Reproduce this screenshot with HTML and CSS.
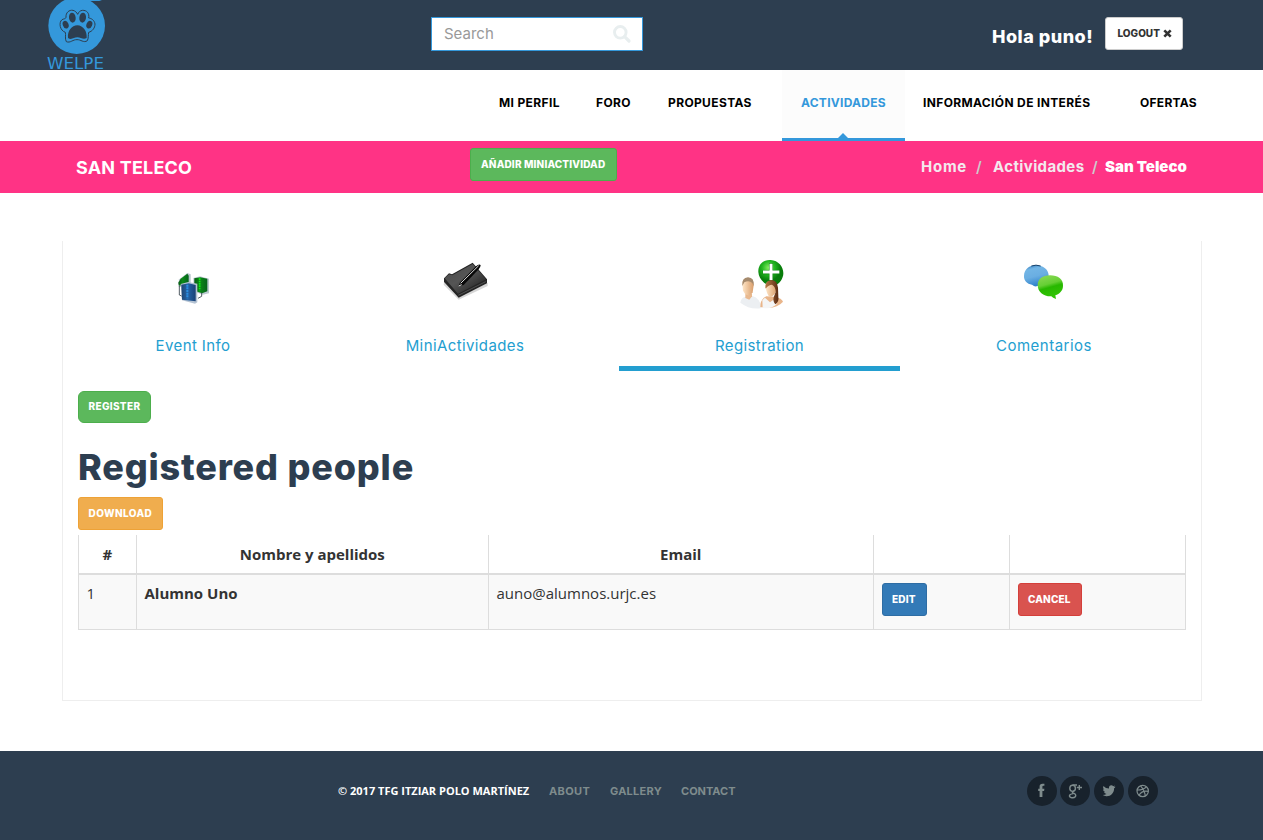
FILE: index.html
```html
<!DOCTYPE html>
<html lang="es">
<head>
<meta charset="utf-8">
<title>San Teleco</title>
<link rel="stylesheet" href="styles.css">
</head>
<body>
<header class="topbar">
  <a class="logo">
    <svg width="60" height="70" viewBox="45 0 180 210">
      <circle cx="140" cy="77" r="85" fill="#3498db"/>
      <path d="M165 0H216L208 3H182L178 9Z" fill="#3498db"/>
      <g fill="none" stroke="#2d3e50" stroke-width="3" stroke-linejoin="round">
        <path d="M106 97C90 92 85 68 96 59C101 56 107 57 108 52C107 38 117 29 129 31C136 33 140 37 143 43C146 36 150 32 157 31C170 30 179 40 176 54C184 55 193 60 195 72C195 84 187 94 176 97C174 106 176 115 172 122C161 130 152 118 141 119C129 118 121 130 109 125C104 116 108 105 106 97Z"/>
      </g>
      <g fill="#2d3e50">
        <ellipse cx="127" cy="53" rx="10" ry="15" transform="rotate(-8 127 53)"/>
        <ellipse cx="158" cy="53" rx="10" ry="15" transform="rotate(8 158 53)"/>
        <ellipse cx="107" cy="74" rx="8.5" ry="12" transform="rotate(-22 107 74)"/>
        <ellipse cx="178" cy="74" rx="8.5" ry="12" transform="rotate(22 178 74)"/>
        <path d="M114 114C112 92 125 77 142 76C160 77 172 94 170 114C160 120 152 112 142 112C132 112 124 121 114 114Z"/>
      </g>
      <text x="51" y="206" class="logo-text" textLength="171" lengthAdjust="spacingAndGlyphs">WELPE</text>
    </svg>
  </a>
  <div class="search"><span class="search-hint">Search</span>
    <svg width="18" height="18" viewBox="0 0 18 18"><circle cx="7.3" cy="7.3" r="5.8" fill="none" stroke="#e8eeef" stroke-width="2.9"/><path d="M11.6 11.6L16 16" stroke="#e8eeef" stroke-width="3.2" stroke-linecap="round"/></svg>
  </div>
  <div class="user"><span class="hello">Hola puno!</span>
    <button class="btn btn-default"><span class="t-logout">LOGOUT</span>
      <svg width="9" height="9" viewBox="0 0 9 9"><path d="M1.3 1.3L7.7 7.7M7.7 1.3L1.3 7.7" stroke="#333" stroke-width="2.6"/></svg>
    </button>
  </div>
</header>
<nav class="nav">
  <a><span class="n1">MI PERFIL</span></a><a><span class="n2">FORO</span></a><a><span class="n3">PROPUESTAS</span></a><a class="active"><span class="n4">ACTIVIDADES</span></a><a class="nav-info"><span class="n5">INFORMACIÓN DE INTERÉS</span></a><a><span class="n6">OFERTAS</span></a>
</nav>
<section class="banner">
  <h1 class="banner-title">SAN TELECO</h1>
  <button class="btn btn-success btn-add"><span class="t-add">AÑADIR MINIACTIVIDAD</span></button>
  <div class="crumbs"><a class="c-home">Home</a><i>/</i><a class="c-act">Actividades</a><i class="second">/</i><b class="c-san">San Teleco</b></div>
</section>
<main class="card">
  <div class="tabs">
    <a class="tab">
      <svg width="60" height="65" viewBox="9 0 180 195">
        <defs>
          <linearGradient id="blueBook" x2="1"><stop offset="0" stop-color="#204673"/><stop offset=".45" stop-color="#2463a6"/><stop offset="1" stop-color="#1b4176"/></linearGradient>
          <linearGradient id="greenBook" x2="1"><stop offset="0" stop-color="#075c12"/><stop offset=".4" stop-color="#0c8a18"/><stop offset="1" stop-color="#05641b"/></linearGradient>
        </defs>
        <path d="M54 101L58 88L82 69L92 73V105L57 112Z" fill="#b7c5cb"/>
        <path d="M55 98L62 86L82 71L86 77V101L57 107Z" fill="url(#greenBook)"/>
        <path d="M100 84L120 79L147 86V130L128 134L101 124Z" fill="#bcc9d0"/>
        <path d="M103 85L121 82L142 86V124L126 130L103 122Z" fill="url(#greenBook)"/>
        <path d="M119 85V121" stroke="#12ea14" stroke-width="5" stroke-dasharray="5 2"/>
        <path d="M58 108V135L67 139M114 145L125 139V128" fill="none" stroke="#333f48" stroke-width="2.5"/>
        <path d="M62 102L85 96L112 101V157L105 161L66 151Z" fill="#b5c3d3"/>
        <path d="M64 104L86 100L107 105V154L66 149Z" fill="url(#blueBook)"/>
        <path d="M82 104V145" stroke="#2b8de0" stroke-width="6" stroke-dasharray="6 2"/>
      </svg><span class="t1">Event Info</span></a>
    <a class="tab tab-mini">
      <svg width="60" height="65" viewBox="15 0 180 195">
        <defs><linearGradient id="folder" x2="1" y2="1"><stop offset="0" stop-color="#484848"/><stop offset=".45" stop-color="#555"/><stop offset="1" stop-color="#171717"/></linearGradient></defs>
        <path d="M42 97L85 142L173 98V108L86 149L41 104Z" fill="#bbb" opacity=".6"/>
        <path d="M42 85L57 70L66 73L128 38L171 88V100L86 143L42 96Z" fill="#242424"/>
        <path d="M44 85L57 73L67 76L128 42L168 88L84 131Z" fill="url(#folder)"/>
        <path d="M85 136L167 95" stroke="#6a6a6a" stroke-width="2"/>
        <path d="M85 109L91 97L138 49Q148 40 152 46Q152 51 146 58L101 105Z" fill="#080808"/>
        <path d="M92 100L146 47M86 108L95 104" stroke="#ddd" stroke-width="3"/>
      </svg><span class="t2">MiniActividades</span></a>
    <a class="tab active">
      <svg width="60" height="65" viewBox="0 0 180 195">
        <defs>
          <radialGradient id="plusBg" cx=".4" cy=".3"><stop offset="0" stop-color="#83ed60"/><stop offset=".5" stop-color="#24b822"/><stop offset="1" stop-color="#087d0b"/></radialGradient>
          <linearGradient id="skin" x2="1"><stop offset="0" stop-color="#ffe7c9"/><stop offset="1" stop-color="#d99d6a"/></linearGradient>
          <linearGradient id="hair" x2="1"><stop offset="0" stop-color="#b87945"/><stop offset="1" stop-color="#592a12"/></linearGradient>
        </defs>
        <path d="M85 66C84 44 100 28 122 30C150 31 166 60 158 81C151 104 129 113 112 104C96 96 86 82 85 66Z" fill="url(#plusBg)"/>
        <path d="M123 40V91M98 67H149" stroke="#0d820d" stroke-width="12"/>
        <path d="M123 41V90M99 66H148" stroke="#fff" stroke-width="9"/>
        <path d="M31 158Q33 143 46 140L67 138Q91 145 95 174Q61 181 31 158Z" fill="#eceff2"/>
        <path d="M46 132V144L58 149L66 139V130Z" fill="#e9b98f"/>
        <path d="M37 102Q37 83 54 83Q71 84 71 106L68 127L58 137L46 133L39 122Z" fill="url(#skin)"/>
        <path d="M37 108Q34 84 54 82Q74 83 71 108L67 99Q57 90 43 97Z" fill="#a58a6d"/>
        <path d="M91 171Q91 146 109 139L134 140Q156 145 159 155Q138 180 91 171Z" fill="#e9b58a"/>
        <path d="M97 151L105 143L120 157L135 146L140 163Q120 180 98 173Z" fill="#f4f5f6"/>
        <path d="M107 110Q107 91 124 92Q142 92 140 113Q139 134 120 142Q109 132 107 110Z" fill="url(#skin)"/>
        <path d="M106 115Q105 91 124 90Q142 91 144 113L145 141Q148 154 136 163Q128 154 131 142L137 126Q137 110 126 104Q116 104 108 115Z" fill="url(#hair)"/>
      </svg><span class="t3">Registration</span></a>
    <a class="tab">
      <svg width="60" height="65" viewBox="12 0 180 195">
        <defs>
          <linearGradient id="blueBubble" y2="1" x2=".3"><stop offset="0" stop-color="#2871b4"/><stop offset=".25" stop-color="#72b5e5"/><stop offset=".6" stop-color="#6aaee2"/><stop offset="1" stop-color="#3184cc"/></linearGradient>
          <linearGradient id="greenBubble" y2="1" x2=".3"><stop offset="0" stop-color="#8fd95a"/><stop offset=".45" stop-color="#65cf34"/><stop offset=".6" stop-color="#27b800"/><stop offset="1" stop-color="#32c405"/></linearGradient>
        </defs>
        <path d="M42 77C43 57 58 46 78 46C98 46 115 57 116 76C116 94 101 107 82 108Q75 112 66 104C51 102 41 91 42 77Z" fill="url(#blueBubble)"/>
        <path d="M64 48Q78 43 92 48" fill="none" stroke="#123f6a" stroke-width="3"/>
        <path d="M83 105C83 87 98 76 120 76C144 76 160 88 159 107C159 122 149 131 136 136L138 147Q128 144 124 139C101 140 83 126 83 105Z" fill="url(#greenBubble)"/>
      </svg><span class="t4">Comentarios</span></a>
  </div>
  <button class="btn btn-success btn-register"><span class="t-reg">REGISTER</span></button>
  <h2 class="heading">Registered people</h2>
  <button class="btn btn-warning"><span class="t-down">DOWNLOAD</span></button>
  <table class="people">
    <colgroup><col class="w1"><col class="w2"><col class="w3"><col class="w4"><col class="w5"></colgroup>
    <thead><tr><th>#</th><th>Nombre y apellidos</th><th>Email</th><th></th><th></th></tr></thead>
    <tbody><tr><td>1</td><td><b>Alumno Uno</b></td><td>auno@alumnos.urjc.es</td><td><button class="btn btn-primary"><span class="t-edit">EDIT</span></button></td><td><button class="btn btn-danger"><span class="t-cancel">CANCEL</span></button></td></tr></tbody>
  </table>
</main>
<footer class="footer">
  <div class="foot-links"><span class="copy">© 2017 TFG ITZIAR POLO MARTÍNEZ</span><a class="f1">ABOUT</a><a class="f2">GALLERY</a><a class="f3">CONTACT</a></div>
  <div class="social">
    <a><svg width="30" height="30" viewBox="0 0 30 30"><path d="M17.4 9.8H16.2Q15.4 9.8 15.4 10.8V12.8H17.4L17.1 15H15.4V21H12.6V15H11.2V12.8H12.6V10.6Q12.6 7.8 15.5 7.8H17.4Z" fill="#7f8c8d"/></svg></a>
    <a><svg width="30" height="30" viewBox="0 0 30 30" fill="none" stroke="#7f8c8d" stroke-width="1.4"><ellipse cx="12.6" cy="12.3" rx="2.8" ry="3.1"/><path d="M17 9H12.5M14 15Q11 16 13.5 17.2Q16.5 18.5 15.5 20.5Q13.8 22.4 11 21.5Q8.5 20.5 10 18.8Q11.2 17.8 13.5 17.6M19.3 9V14M16.8 11.5H22"/></svg></a>
    <a><svg width="30" height="30" viewBox="0 0 30 30"><path d="M21.5 10.7Q20.8 11.7 20.1 12.2C20.2 17 16.5 20.5 12.3 20.2Q10.3 20 8.7 19Q11 19 12.5 17.9Q10.6 17.6 10 16H11.2Q9 15.2 9 13.2L10.2 13.5Q8.3 12 9.4 9.9Q11.7 12.5 15 12.6C14.4 9.7 17.5 8.4 19.3 10.2L21 9.6L20 11Z" fill="#7f8c8d"/></svg></a>
    <a><svg width="30" height="30" viewBox="0 0 30 30" fill="none" stroke="#7f8c8d" stroke-width="1.2"><circle cx="14.7" cy="15" r="5.7"/><path d="M12.5 9.8Q16.5 14 17.4 20M9 14Q15 14.2 18.4 10.8M11 19.3Q14 14.2 20.3 15.4"/></svg></a>
  </div>
</footer>
</body>
</html>
```
FILE: styles.css
```css
* { box-sizing: border-box; }
body { margin: 0; font-family: "Open Sans", sans-serif; font-size: 15px; color: #333; background: #fff; height: 840px; }
svg { display: block; flex: none; overflow: visible; }
span, a, b { white-space: nowrap; }
.topbar { display: flex; height: 70px; background: #2d3e50; font-family: Inter, sans-serif; }
.logo { width: 386px; margin-left: 45px; }
.logo-text { font: 50px "DejaVu Sans", sans-serif; fill: #3498db; }
.search { display: flex; align-items: center; justify-content: space-between; width: 212px; height: 34px; margin-top: 17px; padding: 0 11px 0 12px; border: 1px solid #3498db; background: #fff; color: #999; }
.search-hint { padding-bottom: 1px; font-size: 15px; }
.user { display: flex; margin-left: 349px; }
.hello { width: 113px; padding-top: 26px; font-size: 18px; font-weight: 800; line-height: 22px; letter-spacing: .5px; color: #fff; }
.btn { display: flex; align-items: flex-start; height: 33px; margin: 0; padding: 9px 0 0 9.5px; border: 1px solid; border-radius: 3px; font: 800 10px/13px Inter, sans-serif; color: #fff; }
.btn-default { width: 78px; margin-top: 17px; padding-left: 11.5px; gap: 3px; border-color: #ccc; background: #fff; color: #333; }
.btn-default svg { margin-top: 2px; }
.btn-success { border-color: #4cae4c; background: #5cb85c; }
.btn-warning { width: 85px; border-color: #eea236; background: #f0ad4e; }
.btn-primary { width: 45px; border-color: #2e6da4; background: #337ab7; }
.btn-danger { width: 64px; border-color: #d43f3a; background: #d9534f; }
.t-add { padding-left: .5px; letter-spacing: .15px; }
.t-reg { letter-spacing: .33px; }
.t-down { letter-spacing: .4px; }
.t-edit, .t-cancel { letter-spacing: .15px; }
.nav { display: grid; grid-template-columns: 97px 72px 133px 123px 216px 94px; height: 71px; margin-left: 480px; width: 735px; font: 700 12px/16px Inter, sans-serif; letter-spacing: .36px; color: #000; }
.nav a { padding: 25px 0 0 19px; }
.n4, .n6 { letter-spacing: .27px; }
.nav .nav-info { padding-left: 18px; }
.nav .active { position: relative; border-bottom: 3px solid #3498db; background: #fcfcfc; color: #3498db; }
.nav .active::after { content: ""; position: absolute; left: 56px; bottom: 0; border: 5px solid transparent; border-top: 0; border-bottom-color: #3498db; }
.banner { display: flex; height: 52px; background: #ff3385; color: #fff; font-family: Inter, sans-serif; }
.banner-title { width: 394px; margin: 16px 0 0 76px; font-size: 18px; line-height: 22px; letter-spacing: .2px; }
.btn-add { width: 147px; margin-top: 7px; }
.crumbs { display: flex; margin: 16px 0 0 304px; font-size: 15px; font-weight: 700; line-height: 20px; }
.crumbs a { color: #f3e9ee; }
.crumbs i { width: 17px; font-style: normal; font-weight: 600; color: #ccc; }
.c-home { width: 55px; letter-spacing: .75px; }
.c-act { width: 99px; letter-spacing: .38px; }
.crumbs .second { width: 13px; }
.card { width: 1140px; height: 460px; margin: 48px 0 0 62px; padding: 9px 15px 0; border: 1px solid #eee; border-top: 0; }
.tabs { display: grid; grid-template-columns: 230px 311px 281px 288px; height: 121px; color: #239ed0; font: 15px/20px Inter, sans-serif; letter-spacing: .4px; }
.t4 { letter-spacing: .5px; }
.tab { display: flex; flex-direction: column; align-items: center; gap: 21px; }
.tab-mini { padding-left: 3px; }
.tab.active { border-bottom: 5px solid #239ed0; }
.btn-register { width: 73px; height: 32px; margin-top: 20px; padding-top: 8px; border-radius: 6px; }
.heading { margin: 22px 0 8px; font: 800 36px/44px Inter, sans-serif; letter-spacing: .82px; color: #2d3e50; }
.people { width: 1108px; margin-top: 5px; border-collapse: collapse; table-layout: fixed; line-height: 21px; }
.w1 { width: 58px; } .w2 { width: 352px; } .w3 { width: 385px; } .w4 { width: 136px; } .w5 { width: 176px; }
.people { width: 1107px; }
.people th, .people td { padding: 8px 8px 8px 7.5px; border: 1px solid #ddd; vertical-align: top; text-align: left; }
.people th { height: 39px; padding-top: 9px; padding-bottom: 7px; border-top: 0; border-bottom-width: 2px; text-align: center; }
.people td { height: 55px; background: #f9f9f9; }
.footer { display: flex; height: 89px; margin-top: 50px; background: #2d3e50; font: 700 11px/16px Inter, sans-serif; color: #7f8c8d; }
.foot-links { display: flex; width: 689px; margin-left: 338px; padding-top: 32px; }
.copy { width: 211px; font-family: "Open Sans", sans-serif; color: #fff; }
.f1 { width: 60px; letter-spacing: .35px; } .f2 { width: 72px; padding-left: 1px; letter-spacing: .25px; }
.social { display: flex; gap: 4px; padding-top: 25px; }
.social a { width: 30px; height: 30px; border-radius: 50%; background: #18222c; }
.social a:first-child { margin-right: -1px; }
```
